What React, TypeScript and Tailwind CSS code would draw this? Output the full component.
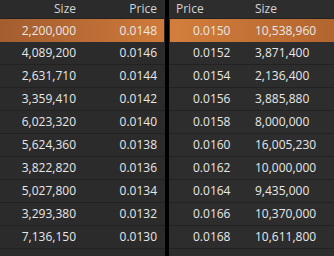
const bids = [
  ["2,200,000", "0.0148"],
  ["4,089,200", "0.0146"],
  ["2,631,710", "0.0144"],
  ["3,359,410", "0.0142"],
  ["6,023,320", "0.0140"],
  ["5,624,360", "0.0138"],
  ["3,822,820", "0.0136"],
  ["5,027,800", "0.0134"],
  ["3,293,380", "0.0132"],
  ["7,136,150", "0.0130"],
];

const asks = [
  ["0.0150", "10,538,960"],
  ["0.0152", "3,871,400"],
  ["0.0154", "2,136,400"],
  ["0.0156", "3,885,880"],
  ["0.0158", "8,000,000"],
  ["0.0160", "16,005,230"],
  ["0.0162", "10,000,000"],
  ["0.0164", "9,435,000"],
  ["0.0166", "10,370,000"],
  ["0.0168", "10,611,800"],
];

const App = () => {
  return (
    <div className="flex h-[256px] w-[334px] overflow-hidden bg-[#2b2b2b] font-['Open_Sans','Noto_Sans',sans-serif] text-[12px] text-[#e8e8e8]">
      {/* bids */}
      <div className="w-[165px] shrink-0 bg-[#2b2b2b]">
        <div className="flex h-[19px] items-center border-b border-[#222] pr-[8px] text-[#d4d4d4]">
          <span className="w-[76px] text-right">Size</span>
          <span className="flex-1 text-right">Price</span>
        </div>
        {bids.map(([size, price], i) => (
          <div
            key={price}
            className={
              i === 0
                ? "mr-px flex h-[23px] items-center bg-gradient-to-r from-[#a35d2f] to-[#cf7a3a] pr-[7px]"
                : "flex h-[23px] items-center border-b border-[#222] pr-[8px]"
            }
          >
            <span className="w-[76px] text-right">{size}</span>
            <span className="flex-1 text-right">{price}</span>
          </div>
        ))}
      </div>

      <div className="w-[4px] shrink-0 bg-black" />

      {/* asks */}
      <div className="flex-1 bg-[#2d2d2d]">
        <div className="flex h-[19px] items-center border-b border-[#222] pl-[7px] text-[#d4d4d4]">
          <span className="w-[79px]">Price</span>
          <span>Size</span>
        </div>
        {asks.map(([price, size], i) => (
          <div
            key={price}
            className={
              i === 0
                ? "ml-px flex h-[23px] items-center bg-gradient-to-r from-[#d37e3c] to-[#b3652f] pl-[6px]"
                : "flex h-[23px] items-center border-b border-[#222] pl-[7px]"
            }
          >
            <span className="w-[79px] pl-[17px]">{price}</span>
            <span>{size}</span>
          </div>
        ))}
      </div>
    </div>
  );
};

export default App;
